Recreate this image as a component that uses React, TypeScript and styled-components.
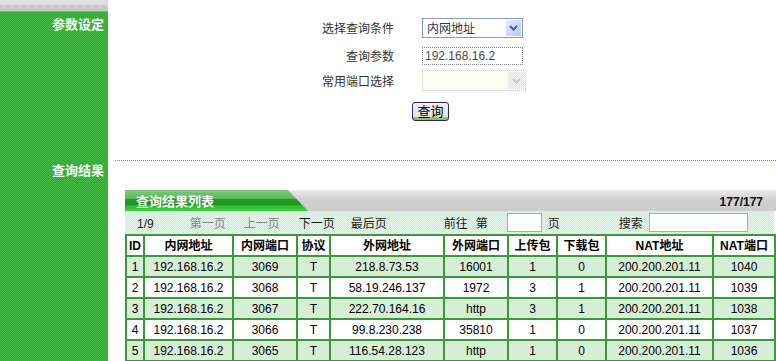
import React from 'react'
import styled, { createGlobalStyle } from 'styled-components'

type Row = {
  id: number
  lanIp: string
  lanPort: string
  proto: string
  wanIp: string
  wanPort: string
  up: number
  down: number
  natIp: string
  natPort: string
}

const rows: Row[] = [
  { id: 1, lanIp: '192.168.16.2', lanPort: '3069', proto: 'T', wanIp: '218.8.73.53', wanPort: '16001', up: 1, down: 0, natIp: '200.200.201.11', natPort: '1040' },
  { id: 2, lanIp: '192.168.16.2', lanPort: '3068', proto: 'T', wanIp: '58.19.246.137', wanPort: '1972', up: 3, down: 1, natIp: '200.200.201.11', natPort: '1039' },
  { id: 3, lanIp: '192.168.16.2', lanPort: '3067', proto: 'T', wanIp: '222.70.164.16', wanPort: 'http', up: 3, down: 1, natIp: '200.200.201.11', natPort: '1038' },
  { id: 4, lanIp: '192.168.16.2', lanPort: '3066', proto: 'T', wanIp: '99.8.230.238', wanPort: '35810', up: 1, down: 0, natIp: '200.200.201.11', natPort: '1037' },
  { id: 5, lanIp: '192.168.16.2', lanPort: '3065', proto: 'T', wanIp: '116.54.28.123', wanPort: 'http', up: 1, down: 0, natIp: '200.200.201.11', natPort: '1036' },
]

const columns = [
  { title: 'ID', width: 18 },
  { title: '内网地址', width: 89 },
  { title: '内网端口', width: 64 },
  { title: '协议', width: 33 },
  { title: '外网地址', width: 114 },
  { title: '外网端口', width: 64 },
  { title: '上传包', width: 49 },
  { title: '下载包', width: 49 },
  { title: 'NAT地址', width: 107 },
  { title: 'NAT端口', width: 62 },
]

const Chevron = ({ color }: { color: string }) => (
  <svg width="9" height="6" viewBox="0 0 9 6">
    <polyline points="1,1 4.5,4.5 8,1" fill="none" stroke={color} strokeWidth="2" />
  </svg>
)

const App = (): JSX.Element => {
  return (
    <>
      <GlobalStyle />
      <Page>
        <Side>
          <Strip />
          <SideLabel $top={4}>参数设定</SideLabel>
        </Side>
        <Main>
          <Form>
            <FieldLabel>选择查询条件</FieldLabel>
            <SelectBox>
              <SelectText>内网地址</SelectText>
              <ArrowButton>
                <Chevron color="#4d6185" />
              </ArrowButton>
            </SelectBox>
            <FieldLabel>查询参数</FieldLabel>
            <TextBox>192.168.16.2</TextBox>
            <FieldLabel>常用端口选择</FieldLabel>
            <DisabledSelect>
              <DisabledArrow>
                <Chevron color="#c8c8c8" />
              </DisabledArrow>
            </DisabledSelect>
          </Form>
          <ButtonRow>
            <QueryButton>查询</QueryButton>
          </ButtonRow>
        </Main>

        <Side>
          <SideLabel $top={2}>查询结果</SideLabel>
        </Side>
        <Main>
          <Divider />
          <Panel>
            <TitleBar>
              <TitleTab>查询结果列表</TitleTab>
              <Count>177/177</Count>
            </TitleBar>
            <Pager>
              <PagerText $ml={12}>1/9</PagerText>
              <PagerText $ml={36} $muted>第一页</PagerText>
              <PagerText $ml={18} $muted>上一页</PagerText>
              <PagerText $ml={19}>下一页</PagerText>
              <PagerText $ml={16}>最后页</PagerText>
              <PagerText $ml={57}>前往</PagerText>
              <PagerText $ml={8}>第</PagerText>
              <PagerInput $ml={19} $w={35} />
              <PagerText $ml={6}>页</PagerText>
              <PagerText $ml={59}>搜索</PagerText>
              <PagerInput $ml={6} $w={99} />
            </Pager>
            <Table>
              <colgroup>
                {columns.map(c => (
                  <col key={c.title} style={{ width: c.width }} />
                ))}
              </colgroup>
              <thead>
                <tr>
                  {columns.map(c => (
                    <Th key={c.title}>{c.title}</Th>
                  ))}
                </tr>
              </thead>
              <tbody>
                {rows.map(r => (
                  <Tr key={r.id} $odd={r.id % 2 === 1}>
                    <Td>{r.id}</Td>
                    <Td>{r.lanIp}</Td>
                    <Td>{r.lanPort}</Td>
                    <Td>{r.proto}</Td>
                    <Td>{r.wanIp}</Td>
                    <Td>{r.wanPort}</Td>
                    <Td>{r.up}</Td>
                    <Td>{r.down}</Td>
                    <Td>{r.natIp}</Td>
                    <Td>{r.natPort}</Td>
                  </Tr>
                ))}
              </tbody>
            </Table>
          </Panel>
        </Main>
      </Page>
    </>
  )
}

const GlobalStyle = createGlobalStyle`
  html, body {
    margin: 0;
    padding: 0;
    background: #fff;
    overflow: hidden;
  }
  body {
    font-family: "Liberation Sans", "Noto Sans CJK SC", sans-serif;
    font-size: 12px;
    color: #000;
  }
`

const Page = styled.div`
  display: grid;
  grid-template-columns: 108px 1fr;
  grid-template-rows: 160px 201px;
  width: 776px;
  height: 361px;
  overflow: hidden;
`

const Side = styled.div`
  display: flex;
  flex-direction: column;
  background-color: #3aad3a;
  background-image: repeating-conic-gradient(#36a836 0 25%, #42b642 0 50%);
  background-size: 2px 2px;
`

const Strip = styled.div`
  height: 11px;
  border-bottom: 1px solid #9c9c9c;
  background:
    repeating-linear-gradient(90deg, #f6f6f6 0 1px, transparent 1px 8px) 3px 6px / 100% 1px no-repeat,
    linear-gradient(#dedede 0 5px, #c8c8c8 5px);
`

const SideLabel = styled.div<{ $top: number }>`
  padding: ${({ $top }) => $top}px 4px 0 0;
  text-align: right;
  color: #fff;
  font-family: "Noto Sans CJK SC", sans-serif;
  font-weight: bold;
  font-size: 13px;
  line-height: 15px;
`

const Main = styled.div`
  display: flex;
  flex-direction: column;
  min-width: 0;
`

const Form = styled.div`
  display: grid;
  grid-template-columns: 130px 104px;
  grid-template-rows: 28px 28px 21px;
  column-gap: 28px;
  align-items: center;
  padding: 14px 0 0 156px;
`

const FieldLabel = styled.div`
  text-align: right;
  color: #333;
  font-family: "Noto Sans CJK SC", sans-serif;
  font-size: 12px;
  line-height: 14px;
`

const SelectBox = styled.div`
  display: flex;
  align-items: center;
  box-sizing: border-box;
  width: 101px;
  height: 20px;
  border: 1px solid #7f9db9;
  background: #fff;
  padding: 1px;
`

const SelectText = styled.span`
  flex: 1;
  padding-left: 3px;
  color: #333;
  font-family: "Noto Sans CJK SC", sans-serif;
  font-size: 12px;
  line-height: 14px;
`

const ArrowButton = styled.span`
  display: flex;
  align-items: center;
  justify-content: center;
  width: 15px;
  height: 16px;
  background: linear-gradient(135deg, #e2e9fe, #b8c9f7);
  border-radius: 1px;
`

const TextBox = styled.div`
  box-sizing: border-box;
  width: 101px;
  height: 18px;
  border: 1px dotted #8a8a8a;
  padding-left: 2px;
  color: #4a4a4a;
  font-size: 12px;
  line-height: 16px;
`

const DisabledSelect = styled.div`
  display: flex;
  justify-content: flex-end;
  box-sizing: border-box;
  width: 104px;
  height: 21px;
  border: 1px dotted #d0d0bc;
  background: #fdfdf4;
  padding: 1px;
`

const DisabledArrow = styled.span`
  display: flex;
  align-items: center;
  justify-content: center;
  width: 16px;
  background-color: #ececec;
  background-image: repeating-conic-gradient(#e2e2e2 0 25%, #f6f6f6 0 50%);
  background-size: 2px 2px;
`

const ButtonRow = styled.div`
  display: flex;
  padding: 11px 0 0 304px;
`

const QueryButton = styled.button`
  box-sizing: border-box;
  width: 37px;
  height: 19px;
  padding: 0 0 2px;
  border: 1px solid #3c2159;
  border-radius: 3px;
  background: linear-gradient(#f2f2f2, #e2e2e2 80%, #7ccf4a 80%);
  color: #000;
  font-family: "Noto Sans CJK SC", sans-serif;
  font-size: 13px;
  line-height: 15px;
`

const Divider = styled.div`
  margin-left: 7px;
  border-top: 1px dotted #33bb33;
`

const Panel = styled.div`
  display: flex;
  flex-direction: column;
  margin: 29px 0 0 17px;
`

const TitleBar = styled.div`
  display: flex;
  align-items: center;
  justify-content: space-between;
  height: 21px;
  background-color: #d6d6d6;
  background-image: linear-gradient(#ececec, #d2d2d2 40%, #cbcbcb);
`

const TitleTab = styled.div`
  box-sizing: border-box;
  align-self: stretch;
  width: 183px;
  padding: 4px 0 0 11px;
  clip-path: polygon(0 0, 163px 0, 100% 100%, 0 100%);
  background: linear-gradient(#7acb7a 0, #5bbb5b 40%, #259b25 45%, #1f941f 70%, #2cbe2c 75%, #3ccf3c 100%);
  color: #fff;
  font-family: "Noto Sans CJK SC", sans-serif;
  font-weight: bold;
  font-size: 13px;
  line-height: 14px;
`

const Count = styled.div`
  padding: 2px 13px 0 0;
  color: #111;
  font-weight: bold;
  font-size: 12px;
`

const Pager = styled.div`
  display: flex;
  align-items: center;
  height: 23px;
  width: 649px;
  background-color: #d8efe0;
  background-image: repeating-conic-gradient(#cfeada 0 25%, #e4f6ea 0 50%);
  background-size: 2px 2px;
`

const PagerText = styled.span<{ $ml: number; $muted?: boolean }>`
  margin-left: ${({ $ml }) => $ml}px;
  color: ${({ $muted }) => ($muted ? '#858585' : '#1a1a1a')};
  font-size: 12px;
  line-height: 14px;
  padding-top: 2px;
`

const PagerInput = styled.span<{ $ml: number; $w: number }>`
  box-sizing: border-box;
  margin-left: ${({ $ml }) => $ml}px;
  width: ${({ $w }) => $w}px;
  height: 19px;
  border: 1px solid #a9a9a9;
  background: #fff;
`

const Table = styled.table`
  width: 649px;
  table-layout: fixed;
  border-collapse: collapse;
  border: 2px solid #3a9a3a;
`

const Th = styled.th`
  height: 19px;
  padding: 0;
  border: 2px solid #3a9a3a;
  background: #fff;
  font-family: "Liberation Sans", "Noto Sans CJK SC", sans-serif;
  font-weight: bold;
  font-size: 12px;
  line-height: 14px;
  text-align: center;
  white-space: nowrap;
`

const Tr = styled.tr<{ $odd: boolean }>`
  background-color: ${({ $odd }) => ($odd ? '#d5eed5' : '#fff')};
`

const Td = styled.td`
  height: 19px;
  padding: 0;
  border: 2px solid #3a9a3a;
  font-size: 12px;
  line-height: 14px;
  text-align: center;
  white-space: nowrap;
  overflow: hidden;
`

export default App
